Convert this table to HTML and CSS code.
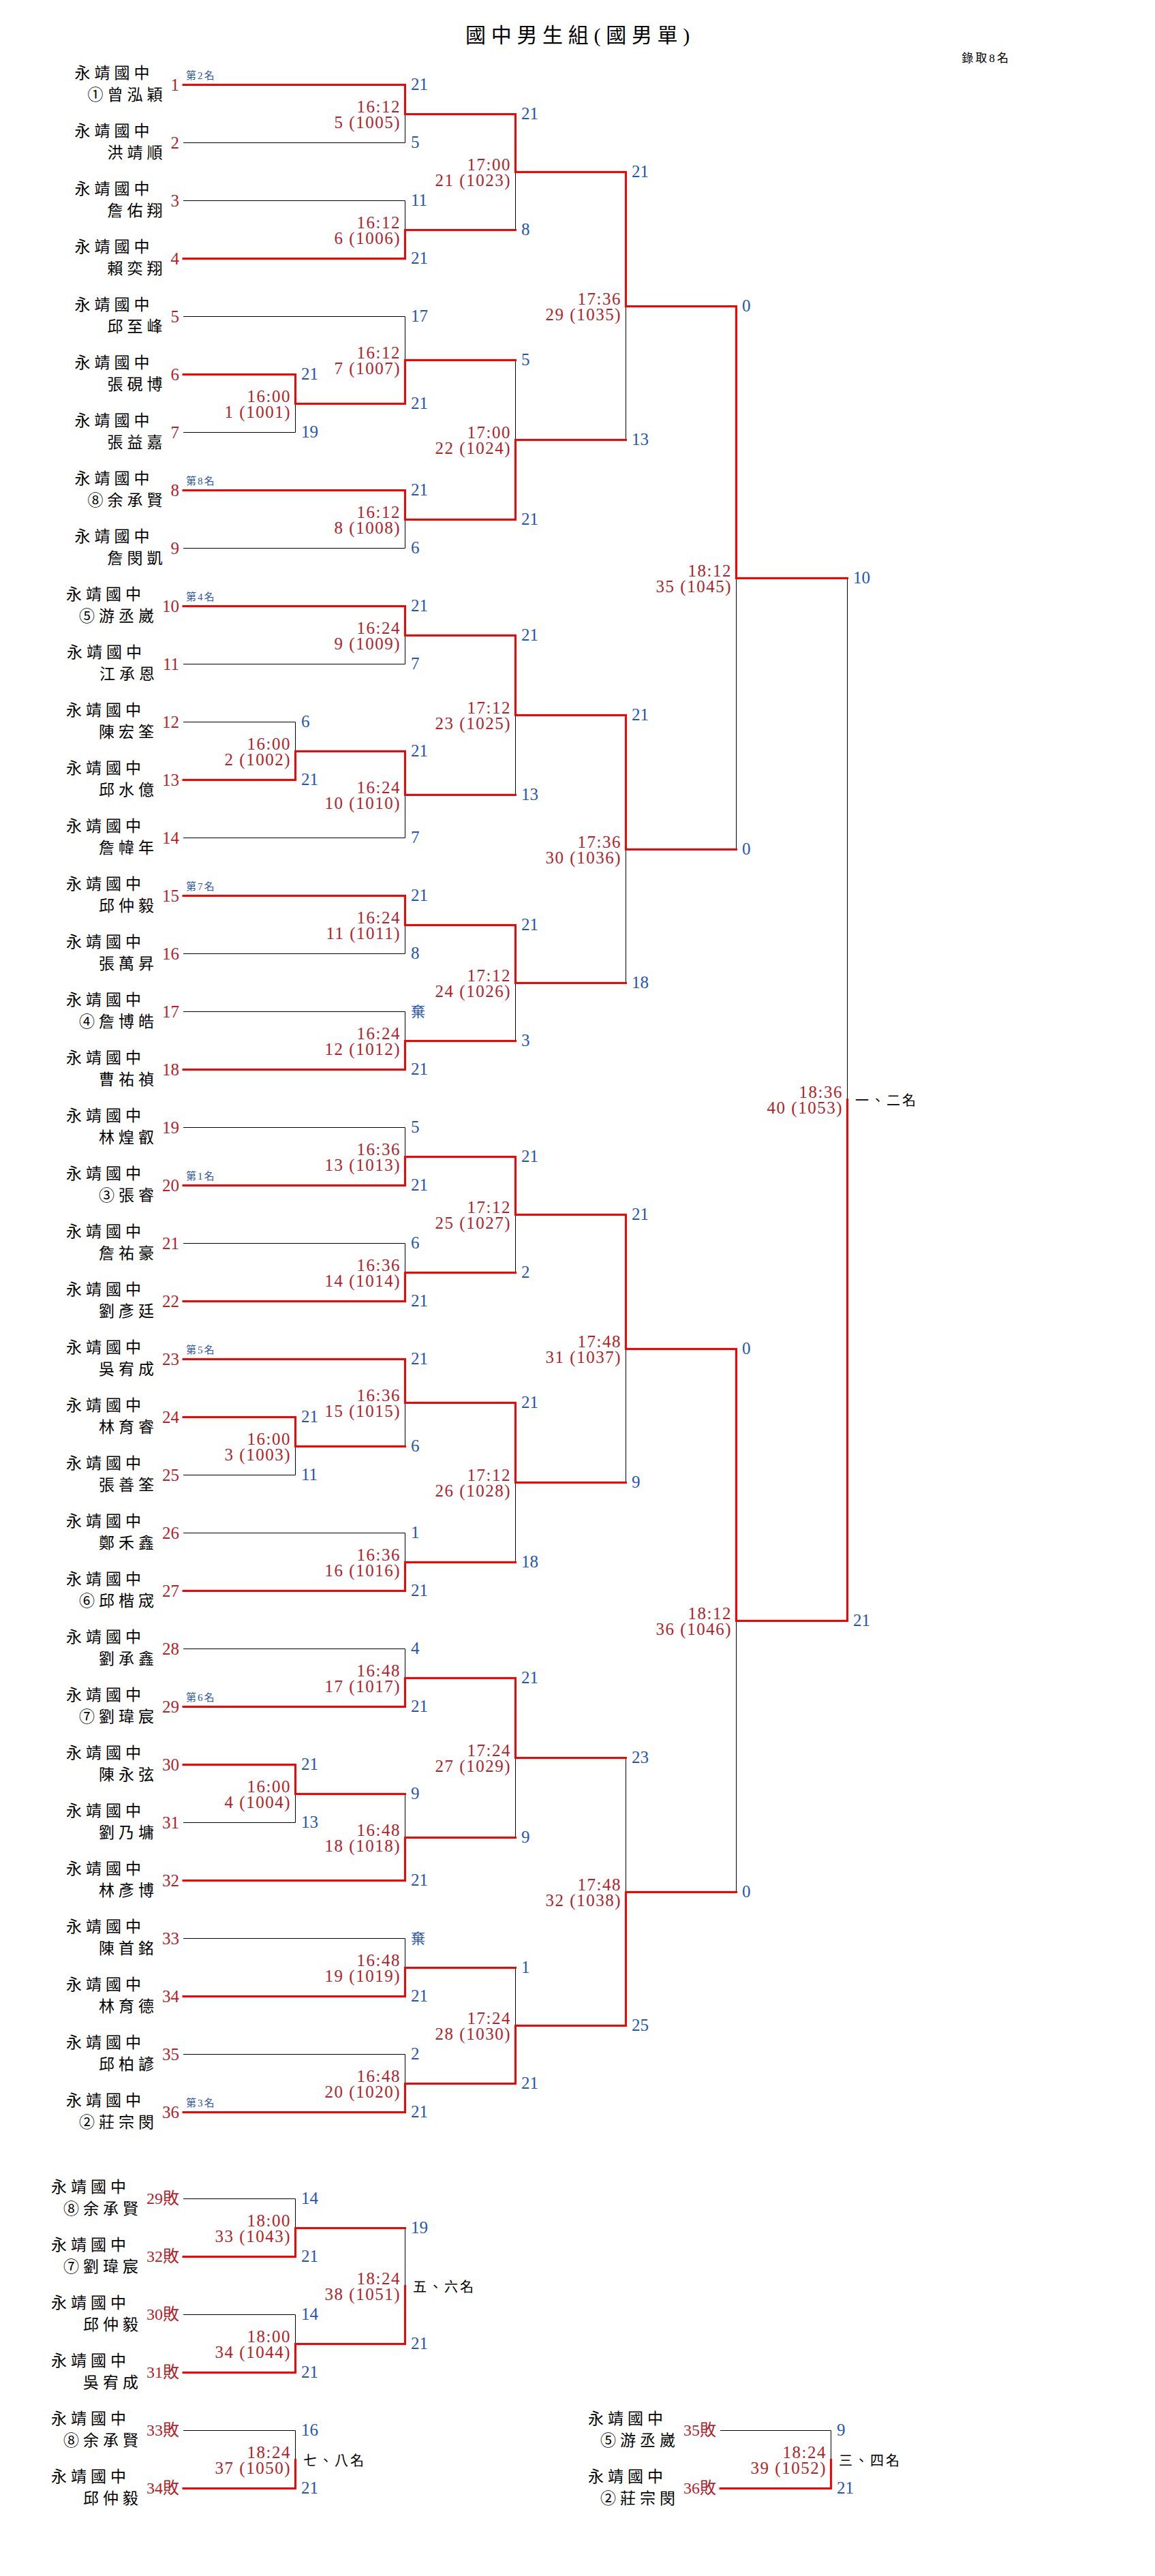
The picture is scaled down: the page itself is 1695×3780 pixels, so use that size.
FILE: index.html
```html
<!DOCTYPE html>
<html lang="zh-Hant">
<head>
<meta charset="utf-8">
<title>國中男生組(國男單)</title>
<link rel="stylesheet" href="styles.css">
</head>
<body>
<div class="page">
  <header class="head">
    <div class="title">國中男生組(國男單)</div>
    <div class="quota">錄取8名</div>
  </header>

  <section class="main" id="main">
    <div class="players">
      <div class="row"><div class="name"><span class="school">永靖國中</span><span>①曾泓穎</span></div><span class="num" id="p1">1</span><span class="rank">第2名</span></div>
      <div class="row"><div class="name"><span class="school">永靖國中</span><span>洪靖順</span></div><span class="num" id="p2">2</span></div>
      <div class="row"><div class="name"><span class="school">永靖國中</span><span>詹佑翔</span></div><span class="num" id="p3">3</span></div>
      <div class="row"><div class="name"><span class="school">永靖國中</span><span>賴奕翔</span></div><span class="num" id="p4">4</span></div>
      <div class="row"><div class="name"><span class="school">永靖國中</span><span>邱至峰</span></div><span class="num" id="p5">5</span></div>
      <div class="row"><div class="name"><span class="school">永靖國中</span><span>張硯博</span></div><span class="num" id="p6">6</span></div>
      <div class="row"><div class="name"><span class="school">永靖國中</span><span>張益嘉</span></div><span class="num" id="p7">7</span></div>
      <div class="row"><div class="name"><span class="school">永靖國中</span><span>⑧余承賢</span></div><span class="num" id="p8">8</span><span class="rank">第8名</span></div>
      <div class="row"><div class="name"><span class="school">永靖國中</span><span>詹閔凱</span></div><span class="num" id="p9">9</span></div>
      <div class="row"><div class="name"><span class="school">永靖國中</span><span>⑤游丞崴</span></div><span class="num" id="p10">10</span><span class="rank">第4名</span></div>
      <div class="row"><div class="name"><span class="school">永靖國中</span><span>江承恩</span></div><span class="num" id="p11">11</span></div>
      <div class="row"><div class="name"><span class="school">永靖國中</span><span>陳宏筌</span></div><span class="num" id="p12">12</span></div>
      <div class="row"><div class="name"><span class="school">永靖國中</span><span>邱水億</span></div><span class="num" id="p13">13</span></div>
      <div class="row"><div class="name"><span class="school">永靖國中</span><span>詹幃年</span></div><span class="num" id="p14">14</span></div>
      <div class="row"><div class="name"><span class="school">永靖國中</span><span>邱仲毅</span></div><span class="num" id="p15">15</span><span class="rank">第7名</span></div>
      <div class="row"><div class="name"><span class="school">永靖國中</span><span>張萬昇</span></div><span class="num" id="p16">16</span></div>
      <div class="row"><div class="name"><span class="school">永靖國中</span><span>④詹博皓</span></div><span class="num" id="p17">17</span></div>
      <div class="row"><div class="name"><span class="school">永靖國中</span><span>曹祐禎</span></div><span class="num" id="p18">18</span></div>
      <div class="row"><div class="name"><span class="school">永靖國中</span><span>林煌叡</span></div><span class="num" id="p19">19</span></div>
      <div class="row"><div class="name"><span class="school">永靖國中</span><span>③張睿</span></div><span class="num" id="p20">20</span><span class="rank">第1名</span></div>
      <div class="row"><div class="name"><span class="school">永靖國中</span><span>詹祐豪</span></div><span class="num" id="p21">21</span></div>
      <div class="row"><div class="name"><span class="school">永靖國中</span><span>劉彥廷</span></div><span class="num" id="p22">22</span></div>
      <div class="row"><div class="name"><span class="school">永靖國中</span><span>吳宥成</span></div><span class="num" id="p23">23</span><span class="rank">第5名</span></div>
      <div class="row"><div class="name"><span class="school">永靖國中</span><span>林育睿</span></div><span class="num" id="p24">24</span></div>
      <div class="row"><div class="name"><span class="school">永靖國中</span><span>張善筌</span></div><span class="num" id="p25">25</span></div>
      <div class="row"><div class="name"><span class="school">永靖國中</span><span>鄭禾鑫</span></div><span class="num" id="p26">26</span></div>
      <div class="row"><div class="name"><span class="school">永靖國中</span><span>⑥邱楷宬</span></div><span class="num" id="p27">27</span></div>
      <div class="row"><div class="name"><span class="school">永靖國中</span><span>劉承鑫</span></div><span class="num" id="p28">28</span></div>
      <div class="row"><div class="name"><span class="school">永靖國中</span><span>⑦劉瑋宸</span></div><span class="num" id="p29">29</span><span class="rank">第6名</span></div>
      <div class="row"><div class="name"><span class="school">永靖國中</span><span>陳永弦</span></div><span class="num" id="p30">30</span></div>
      <div class="row"><div class="name"><span class="school">永靖國中</span><span>劉乃墉</span></div><span class="num" id="p31">31</span></div>
      <div class="row"><div class="name"><span class="school">永靖國中</span><span>林彥博</span></div><span class="num" id="p32">32</span></div>
      <div class="row"><div class="name"><span class="school">永靖國中</span><span>陳首銘</span></div><span class="num" id="p33">33</span></div>
      <div class="row"><div class="name"><span class="school">永靖國中</span><span>林育德</span></div><span class="num" id="p34">34</span></div>
      <div class="row"><div class="name"><span class="school">永靖國中</span><span>邱柏諺</span></div><span class="num" id="p35">35</span></div>
      <div class="row"><div class="name"><span class="school">永靖國中</span><span>②莊宗閔</span></div><span class="num" id="p36">36</span><span class="rank">第3名</span></div>
    </div>
  </section>

  <section class="cons" id="cons">
    <div class="players">
      <div class="row"><div class="name cname"><span class="school">永靖國中</span><span>⑧余承賢</span></div><span class="num lose-num" id="q1">29敗</span></div>
      <div class="row"><div class="name cname"><span class="school">永靖國中</span><span>⑦劉瑋宸</span></div><span class="num lose-num" id="q2">32敗</span></div>
      <div class="row"><div class="name cname"><span class="school">永靖國中</span><span>邱仲毅</span></div><span class="num lose-num" id="q3">30敗</span></div>
      <div class="row"><div class="name cname"><span class="school">永靖國中</span><span>吳宥成</span></div><span class="num lose-num" id="q4">31敗</span></div>
      <div class="row"><div class="name cname"><span class="school">永靖國中</span><span>⑧余承賢</span></div><span class="num lose-num" id="q5">33敗</span></div>
      <div class="row"><div class="name cname"><span class="school">永靖國中</span><span>邱仲毅</span></div><span class="num lose-num" id="q6">34敗</span></div>
    </div>
    <div class="players cons-right">
      <div class="row"><div class="name cname"><span class="school">永靖國中</span><span>⑤游丞崴</span></div><span class="num lose-num" id="q7">35敗</span></div>
      <div class="row"><div class="name cname"><span class="school">永靖國中</span><span>②莊宗閔</span></div><span class="num lose-num" id="q8">36敗</span></div>
    </div>
  </section>
</div>
<script src="script.js"></script>
</body>
</html>
```

FILE: styles.css
```css
html, body {
  margin: 0;
  padding: 0;
  background: #ffffff;
  color: #000000;
}

.page {
  width: 1695px;
}

.head {
  height: 82px;
}

.title {
  padding-top: 35px;
  padding-left: 8px;
  line-height: 34px;
  font-size: 30px;
  letter-spacing: 7.7px;
  text-align: center;
  font-family: "Liberation Serif", "Noto Sans CJK TC", serif;
  white-space: nowrap;
}

.quota {
  margin-top: 7px;
  line-height: 20px;
  padding-right: 212px;
  text-align: right;
  font-size: 17px;
  letter-spacing: 3px;
  font-family: "Liberation Serif", "Noto Sans CJK TC", serif;
}

.main {
  position: relative;
  height: 3060px;
}

.players {
  width: 263px;
}

.row {
  position: relative;
  height: 85px;
  display: flex;
  justify-content: flex-end;
  align-items: center;
}

.name {
  display: flex;
  flex-direction: column;
  align-items: flex-end;
  margin-right: 6px;
  padding-bottom: 8px;
  font-family: "Noto Sans CJK TC", sans-serif;
  font-size: 23px;
  line-height: 32px;
  letter-spacing: 6px;
  white-space: nowrap;
}

.school {
  padding-right: 19px;
}

.cname .school {
  padding-right: 18px;
}

.num {
  font-family: "Liberation Serif", "Noto Sans CJK TC", serif;
  font-size: 25px;
  line-height: 25px;
  color: #b0232a;
  white-space: nowrap;
}

.lose-num {
  font-size: 24px;
}

.rank {
  position: absolute;
  left: 273px;
  top: 20px;
  font-family: "Liberation Serif", "Noto Sans CJK TC", serif;
  font-size: 15px;
  line-height: 18px;
  letter-spacing: 2px;
  color: #2554b5;
  white-space: nowrap;
}

.cons {
  position: relative;
  display: grid;
  grid-template-columns: 263px 788px;
  padding-top: 42px;
  padding-bottom: 40px;
}

.cons-right {
  width: 788px;
  padding-top: 340px;
}

.lines {
  position: absolute;
  left: 0;
  top: 0;
  overflow: visible;
  pointer-events: none;
}

.lines .lose line {
  stroke: #000000;
  stroke-width: 1;
}

.lines .win line {
  stroke: #ff0000;
  stroke-width: 3;
  stroke-linecap: square;
}

.score {
  position: absolute;
  font-family: "Liberation Serif", "Noto Sans CJK TC", serif;
  font-size: 25px;
  line-height: 25px;
  color: #2554b5;
  white-space: nowrap;
}

.score.abandon {
  font-family: "Noto Sans CJK TC", sans-serif;
  font-size: 21px;
}

.mlabel {
  position: absolute;
  transform: translateX(-100%);
  text-align: right;
  font-family: "Liberation Serif", "Noto Sans CJK TC", serif;
  font-size: 25px;
  line-height: 23px;
  letter-spacing: 1.5px;
  color: #b0232a;
  white-space: nowrap;
}

.side {
  position: absolute;
  font-family: "Noto Sans CJK TC", sans-serif;
  font-size: 20px;
  line-height: 24px;
  letter-spacing: 3px;
  color: #000000;
  white-space: nowrap;
}

.score span,
.mlabel span,
.side span {
  display: block;
}
```

FILE: script.js
```js
(function () {
  var NS = 'http://www.w3.org/2000/svg';

  function m(a, b, x, sa, sb, w, t, n, side) {
    return { a: a, b: b, x: x, s: [sa, sb], w: w, t: t, n: n, side: side };
  }

  function snap(v) {
    return Math.floor(v) + 0.5;
  }

  function Canvas(section) {
    var r = section.getBoundingClientRect();
    this.el = section;
    this.ox = r.left;
    this.oy = r.top;
    var svg = document.createElementNS(NS, 'svg');
    svg.setAttribute('class', 'lines');
    svg.setAttribute('width', Math.ceil(r.width));
    svg.setAttribute('height', Math.ceil(r.height));
    this.lose = document.createElementNS(NS, 'g');
    this.lose.setAttribute('class', 'lose');
    this.win = document.createElementNS(NS, 'g');
    this.win.setAttribute('class', 'win');
    svg.appendChild(this.lose);
    svg.appendChild(this.win);
    section.appendChild(svg);
  }

  Canvas.prototype.line = function (x1, y1, x2, y2, red) {
    var l = document.createElementNS(NS, 'line');
    l.setAttribute('x1', x1);
    l.setAttribute('y1', y1);
    l.setAttribute('x2', x2);
    l.setAttribute('y2', y2);
    (red ? this.win : this.lose).appendChild(l);
  };

  Canvas.prototype.text = function (cls, x, y, lines) {
    var d = document.createElement('div');
    d.className = cls;
    d.style.left = x + 'px';
    d.style.top = y + 'px';
    lines.forEach(function (s) {
      var sp = document.createElement('span');
      sp.textContent = s;
      d.appendChild(sp);
    });
    this.el.appendChild(d);
  };

  Canvas.prototype.leaf = function (id) {
    var r = document.getElementById(id).getBoundingClientRect();
    return {
      x: Math.round(r.right - this.ox) + 6,
      y: snap((r.top + r.bottom) / 2 - this.oy),
      leaf: true
    };
  };

  Canvas.prototype.draw = function (node) {
    if (typeof node === 'string') {
      return this.leaf(node);
    }
    var A = this.draw(node.a);
    var B = this.draw(node.b);
    var X = node.x + 0.5;
    var ym = snap((A.y + B.y) / 2);
    var self = this;
    this.line(X, A.y, X, B.y, false);
    [A, B].forEach(function (C, i) {
      self.line(C.x, C.y, X, C.y, !C.leaf || node.w === i);
      var sc = String(node.s[i]);
      self.text(sc === '棄' ? 'score abandon' : 'score', node.x + 9, C.y - 14, [sc]);
    });
    this.line(X, node.w === 0 ? A.y : B.y, X, ym, true);
    this.text('mlabel', node.x - 6, ym - 23, [node.t, node.n]);
    if (node.side) {
      this.text('side', node.x + 12, ym - 12, [node.side]);
    }
    return { x: X, y: ym, leaf: false };
  };

  var c1 = 433, c2 = 594, c3 = 756, c4 = 918, c5 = 1080, c6 = 1243;

  var M1 = m('p6', 'p7', c1, 21, 19, 0, '16:00', '1 (1001)');
  var M2 = m('p12', 'p13', c1, 6, 21, 1, '16:00', '2 (1002)');
  var M3 = m('p24', 'p25', c1, 21, 11, 0, '16:00', '3 (1003)');
  var M4 = m('p30', 'p31', c1, 21, 13, 0, '16:00', '4 (1004)');

  var M5 = m('p1', 'p2', c2, 21, 5, 0, '16:12', '5 (1005)');
  var M6 = m('p3', 'p4', c2, 11, 21, 1, '16:12', '6 (1006)');
  var M7 = m('p5', M1, c2, 17, 21, 1, '16:12', '7 (1007)');
  var M8 = m('p8', 'p9', c2, 21, 6, 0, '16:12', '8 (1008)');
  var M9 = m('p10', 'p11', c2, 21, 7, 0, '16:24', '9 (1009)');
  var M10 = m(M2, 'p14', c2, 21, 7, 0, '16:24', '10 (1010)');
  var M11 = m('p15', 'p16', c2, 21, 8, 0, '16:24', '11 (1011)');
  var M12 = m('p17', 'p18', c2, '棄', 21, 1, '16:24', '12 (1012)');
  var M13 = m('p19', 'p20', c2, 5, 21, 1, '16:36', '13 (1013)');
  var M14 = m('p21', 'p22', c2, 6, 21, 1, '16:36', '14 (1014)');
  var M15 = m('p23', M3, c2, 21, 6, 0, '16:36', '15 (1015)');
  var M16 = m('p26', 'p27', c2, 1, 21, 1, '16:36', '16 (1016)');
  var M17 = m('p28', 'p29', c2, 4, 21, 1, '16:48', '17 (1017)');
  var M18 = m(M4, 'p32', c2, 9, 21, 1, '16:48', '18 (1018)');
  var M19 = m('p33', 'p34', c2, '棄', 21, 1, '16:48', '19 (1019)');
  var M20 = m('p35', 'p36', c2, 2, 21, 1, '16:48', '20 (1020)');

  var M21 = m(M5, M6, c3, 21, 8, 0, '17:00', '21 (1023)');
  var M22 = m(M7, M8, c3, 5, 21, 1, '17:00', '22 (1024)');
  var M23 = m(M9, M10, c3, 21, 13, 0, '17:12', '23 (1025)');
  var M24 = m(M11, M12, c3, 21, 3, 0, '17:12', '24 (1026)');
  var M25 = m(M13, M14, c3, 21, 2, 0, '17:12', '25 (1027)');
  var M26 = m(M15, M16, c3, 21, 18, 0, '17:12', '26 (1028)');
  var M27 = m(M17, M18, c3, 21, 9, 0, '17:24', '27 (1029)');
  var M28 = m(M19, M20, c3, 1, 21, 1, '17:24', '28 (1030)');

  var M29 = m(M21, M22, c4, 21, 13, 0, '17:36', '29 (1035)');
  var M30 = m(M23, M24, c4, 21, 18, 0, '17:36', '30 (1036)');
  var M31 = m(M25, M26, c4, 21, 9, 0, '17:48', '31 (1037)');
  var M32 = m(M27, M28, c4, 23, 25, 1, '17:48', '32 (1038)');

  var M35 = m(M29, M30, c5, 0, 0, 0, '18:12', '35 (1045)');
  var M36 = m(M31, M32, c5, 0, 0, 0, '18:12', '36 (1046)');

  var M40 = m(M35, M36, c6, 10, 21, 1, '18:36', '40 (1053)', '一、二名');

  var M33 = m('q1', 'q2', c1, 14, 21, 1, '18:00', '33 (1043)');
  var M34 = m('q3', 'q4', c1, 14, 21, 1, '18:00', '34 (1044)');
  var M38 = m(M33, M34, c2, 19, 21, 1, '18:24', '38 (1051)', '五、六名');
  var M37 = m('q5', 'q6', c1, 16, 21, 1, '18:24', '37 (1050)', '七、八名');
  var M39 = m('q7', 'q8', 1219, 9, 21, 1, '18:24', '39 (1052)', '三、四名');

  var main = new Canvas(document.getElementById('main'));
  main.draw(M40);

  var cons = new Canvas(document.getElementById('cons'));
  cons.draw(M38);
  cons.draw(M37);
  cons.draw(M39);
})();
```
